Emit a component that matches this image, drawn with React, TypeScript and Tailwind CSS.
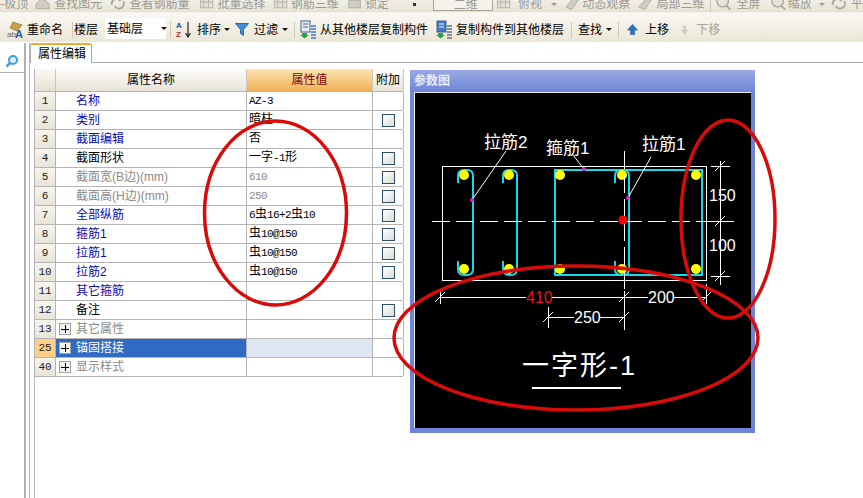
type Row = { no: string; name: string; value?: string; check?: boolean; tone?: "blue" | "gray" | "black"; group?: boolean; active?: boolean };

const rows: Row[] = [
    { no: "1", name: "名称", value: "AZ-3", tone: "blue" },
    { no: "2", name: "类别", value: "暗柱", check: true, tone: "blue" },
    { no: "3", name: "截面编辑", value: "否", tone: "blue" },
    { no: "4", name: "截面形状", value: "一字-1形", check: true, tone: "black" },
    { no: "5", name: "截面宽(B边)(mm)", value: "610", check: true, tone: "gray" },
    { no: "6", name: "截面高(H边)(mm)", value: "250", check: true, tone: "gray" },
    { no: "7", name: "全部纵筋", value: "6虫16+2虫10", check: true, tone: "blue" },
    { no: "8", name: "箍筋1", value: "虫10@150", check: true, tone: "blue" },
    { no: "9", name: "拉筋1", value: "虫10@150", check: true, tone: "blue" },
    { no: "10", name: "拉筋2", value: "虫10@150", check: true, tone: "blue" },
    { no: "11", name: "其它箍筋", tone: "blue" },
    { no: "12", name: "备注", check: true, tone: "black" },
    { no: "13", name: "其它属性", tone: "gray", group: true },
    { no: "25", name: "锚固搭接", group: true, active: true },
    { no: "40", name: "显示样式", tone: "gray", group: true },
];

function Caret({ className = "" }: { className?: string }) {
    return <span className={`inline-block w-0 h-0 border-x-[3px] border-x-transparent border-t-[3px] ${className}`} />;
}

function Sep({ className = "" }: { className?: string }) {
    return <span className={`w-px h-[16px] bg-[#cfc9b6] ${className}`} />;
}

// the top row is disabled, so its icons are washed-out grey shapes
function FadedIcon({ kind = "grid", className = "" }: { kind?: "grid" | "house" | "loop" | "lock" | "cube" | "lens"; className?: string }) {
    return (
        <svg width="16" height="14" viewBox="0 0 16 14" className={className}>
            {kind === "grid" && (
                <>
                    <rect x="1.5" y="0" width="13" height="11" fill="#e4e1d6" stroke="#b5b3a9" />
                    <path d="M5 0v11M10 0v11M1 5h14" stroke="#b5b3a9" />
                </>
            )}
            {kind === "house" && <path d="M1 7L8 0l7 7v5H1z" fill="#cfccc2" stroke="#b0aea4" />}
            {kind === "loop" && <path d="M2 8a5 5 0 0 1 9-4M14 4a5 5 0 0 1-9 5" fill="none" stroke="#a9a79e" strokeWidth="2" />}
            {kind === "lock" && (
                <>
                    <rect x="2" y="3" width="12" height="8" fill="#cfccc2" stroke="#b0aea4" />
                    <path d="M5 3V0h6v3" fill="none" stroke="#b0aea4" />
                </>
            )}
            {kind === "cube" && <path d="M2 10L10 1l5 2-7 10z" fill="#cfccc2" stroke="#b0aea4" />}
            {kind === "lens" && (
                <>
                    <circle cx="7" cy="4" r="6" fill="#e6e4da" stroke="#a9a79e" strokeWidth="1.500" />
                    <path d="M11 9l4 4" stroke="#a9a79e" strokeWidth="2" />
                </>
            )}
        </svg>
    );
}

function TopRow() {
    return (
        <div className="h-[13px] overflow-hidden bg-gradient-to-b from-[#f1efe6] to-[#e6e2d3] border-b border-[#f4f2ea]">
            <div className="flex items-center h-[14px] -mt-[3px] text-[#9a9a94] whitespace-nowrap">
                <span className="w-[28px]">-极顶</span>
                <FadedIcon kind="house" className="ml-[7px]" />
                <span className="ml-[4px]">查找图元</span>
                <FadedIcon kind="loop" className="ml-[8px]" />
                <span className="ml-[4px]">查看钢筋量</span>
                <FadedIcon className="ml-[10px]" />
                <span className="ml-[3px]">批量选择</span>
                <FadedIcon className="ml-[7px]" />
                <span className="ml-[3px]">钢筋三维</span>
                <FadedIcon kind="lock" className="ml-[8px]" />
                <span className="ml-[3px]">锁定</span>
                <span className="ml-[24px] w-[3px] h-[3px] bg-[#333]" />
                <span className="ml-[17px] w-[62px] h-[14px] border border-[#a5a296] bg-[#f4f2ea] pl-[20px]">二维</span>
                <FadedIcon className="ml-[3px]" />
                <span className="ml-[7px]">俯视</span>
                <Caret className="ml-[9px] border-t-[#9a9a94]" />
                <FadedIcon kind="cube" className="ml-[7px]" />
                <span className="ml-[3px]">动态观察</span>
                <FadedIcon kind="cube" className="ml-[7px]" />
                <span className="ml-[4px]">局部三维</span>
                <Sep className="ml-[6px]" />
                <FadedIcon kind="lens" className="ml-[5px]" />
                <span className="ml-[5px]">全屏</span>
                <FadedIcon kind="lens" className="ml-[10px]" />
                <span className="ml-[2px]">缩放</span>
                <Caret className="ml-[7px] border-t-[#9a9a94]" />
                <FadedIcon kind="loop" className="ml-[6px]" />
                <span className="ml-[5px]">平</span>
            </div>
        </div>
    );
}

function CopyIcon({ flip = false }: { flip?: boolean }) {
    return (
        <svg width="17" height="19" viewBox="0 0 17 19">
            <rect x="1" y="1" width="9" height="11" fill={flip ? "#3f78c8" : "#e8eef8"} stroke="#44608c" />
            <path d="M3 4h5M3 7h5" stroke={flip ? "#fff" : "#44608c"} />
            <path d="M2 13h5v2h2l-4.500 3.500L0 15h2z" fill="#2fa04a" />
            <path d="M11 6h5M11 9h5M11 12h5M11 15h5M11 18h5" stroke={flip ? "#5f6f80" : "#3f78c8"} strokeWidth="1.500" />
        </svg>
    );
}

function MainToolbar() {
    return (
        <div className="h-[29px] flex items-center pl-[7px] pt-[4px] whitespace-nowrap text-black bg-gradient-to-b from-[#f9f8f3] to-[#ebe6d6]">
            <svg width="17" height="18" viewBox="0 0 17 18">
                <path d="M6 1l9 3-5 6-7-3z" fill="#c8a048" stroke="#7d6420" strokeWidth="0.600" />
                <text x="0" y="16" fontSize="8" fill="#6a6a6a">ab</text>
                <text x="8" y="17" fontSize="11" fontWeight="700" fill="#2a56a8">A</text>
            </svg>
            <span className="ml-[3px]">重命名</span>
            <Sep className="ml-[9px]" />
            <span className="ml-[1px]">楼层</span>
            <span className="ml-[7px] w-[61px] h-[21px] bg-white flex items-center pl-[2px] relative -top-px">
                基础层
                <Caret className="ml-[18px] border-t-[#111]" />
            </span>
            <Sep className="ml-[4px]" />
            <svg width="18" height="17" viewBox="0 0 18 17" className="ml-[5px]">
                <text x="0" y="7" fontSize="8" fontWeight="700" fill="#2a56a8">A</text>
                <text x="0" y="16" fontSize="8" fontWeight="700" fill="#b03030">Z</text>
                <path d="M12 1v14M9.500 12l2.500 4 2.500-4" stroke="#222" strokeWidth="1.200" fill="none" />
            </svg>
            <span className="ml-[3px]">排序</span>
            <Caret className="ml-[3px] border-t-[#111]" />
            <svg width="14" height="13" viewBox="0 0 14 13" className="ml-[5px]">
                <path d="M0.500 0.500h13L8.500 6.500V12.500L5.500 10.500V6.500z" fill="#3f8fd8" stroke="#2a68a8" />
            </svg>
            <span className="ml-[5px]">过滤</span>
            <Caret className="ml-[4px] border-t-[#111]" />
            <Sep className="ml-[6px]" />
            <span className="ml-[5px] flex"><CopyIcon /></span>
            <span className="ml-[3px]">从其他楼层复制构件</span>
            <span className="ml-[8px] flex"><CopyIcon flip /></span>
            <span className="ml-[3px]">复制构件到其他楼层</span>
            <Sep className="ml-[7px]" />
            <span className="ml-[6px]">查找</span>
            <Caret className="ml-[4px] border-t-[#111]" />
            <Sep className="ml-[6px]" />
            <svg width="11" height="11" viewBox="0 0 11 11" className="ml-[8px]">
                <path d="M5.500 0.500L10.500 6H7.500V10.500H3.500V6H0.500z" fill="#2f74c8" stroke="#1d4f90" strokeWidth="0.600" />
            </svg>
            <span className="ml-[7px]">上移</span>
            <svg width="9" height="10" viewBox="0 0 9 10" className="ml-[11px]">
                <path d="M3 0.500H6V5H8.500L4.500 9.500L0.500 5H3z" fill="#cfcdc6" />
            </svg>
            <span className="ml-[7px] text-[#a5a39c]">下移</span>
        </div>
    );
}

function CheckBox() {
    return <span className="block w-[13px] h-[13px] border border-[#2f4f6f] bg-gradient-to-br from-white to-[#dcdcd4]" />;
}

function ValueText({ text, gray }: { text: string; gray?: boolean }) {
    // latin parts of a value sit on a half-width grid, as in the grid control
    const parts = text.split(/([A-Za-z0-9@+\-]+)/).filter(Boolean);
    return (
        <span className={gray ? "text-[#8c8c8c]" : "text-black"}>
            {parts.map((p, i) =>
                /[A-Za-z0-9@+\-]/.test(p) ? (
                    <span key={i} className="font-['Liberation_Mono',monospace] text-[11px] tracking-[-0.6px]">{p}</span>
                ) : (
                    <span key={i}>{p}</span>
                )
            )}
        </span>
    );
}

function PropRow({ row }: { row: Row }) {
    const nameColor = row.active ? "text-white" : row.tone === "blue" ? "text-[#0a0ab4]" : row.tone === "gray" ? "text-[#8a8a8a]" : "text-black";
    return (
        <div className="flex h-[19px] border-b border-[#b4b4b4] whitespace-nowrap">
            <div className={`w-[21px] shrink-0 text-center border-r border-[#b4b4b4] text-[#222] font-['Liberation_Mono',monospace] text-[11px] leading-[18px] ${row.active ? "bg-[#ffcf8c] text-[#7a1010]" : "bg-gradient-to-b from-[#f7f5ee] to-[#e8e4d8]"}`}>
                {row.no}
            </div>
            <div className={`w-[191px] shrink-0 border-r border-[#b4b4b4] flex items-center ${row.active ? "bg-[#316ac5]" : ""} ${row.group ? "pl-[3px]" : "pl-[20px]"} ${nameColor}`}>
                {row.group && (
                    <span className="w-[12px] h-[12px] mr-[5px] border border-[#a0a0a0] bg-[#f4f4f0] flex items-center justify-center relative">
                        <span className="absolute w-[8px] h-px bg-black" />
                        <span className="absolute w-px h-[8px] bg-black" />
                    </span>
                )}
                {row.name}
            </div>
            <div className={`w-[126px] shrink-0 border-r border-[#b4b4b4] pl-[2px] leading-[17px] ${row.active ? "bg-[#dde6f2]" : ""}`}>
                {row.value && <ValueText text={row.value} gray={row.tone === "gray"} />}
            </div>
            <div className="w-[31px] shrink-0 border-r border-[#b4b4b4] flex items-center justify-center">
                {row.check && <CheckBox />}
            </div>
        </div>
    );
}

function PropTable() {
    return (
        <div className="w-[369px] shrink-0 mt-[6px] border-l border-[#b4b4b4]">
            <div className="flex h-[23px] border-b border-[#b4b4b4] whitespace-nowrap">
                <div className="w-[21px] shrink-0 border-r border-[#c8c8c0] bg-gradient-to-b from-[#fbfaf6] to-[#e4e0d2]" />
                <div className="w-[191px] shrink-0 border-r border-[#c8c8c0] flex items-center justify-center bg-gradient-to-b from-[#fdfcf9] to-[#e8e4d6]">属性名称</div>
                <div className="w-[126px] shrink-0 border-r border-[#c8c8c0] flex items-center justify-center text-[#7a0a0a] bg-gradient-to-b from-[#fbe3b0] to-[#f0b254]">属性值</div>
                <div className="w-[31px] shrink-0 border-r border-[#c8c8c0] flex items-center justify-center bg-gradient-to-b from-[#fdfcf9] to-[#e8e4d6]">附加</div>
            </div>
            {rows.map((r) => (
                <PropRow key={r.no} row={r} />
            ))}
        </div>
    );
}

function Rebar({ x, side = 15 }: { x: number; side?: number }) {
    const l = x - side;
    return (
        <path
            d={`M${l} 183V176Q${l} 170 ${l + 6} 170H${x - 6}Q${x} 170 ${x} 176V269Q${x} 275 ${x - 6} 275H${l + 6}Q${l} 275 ${l} 269V261`}
            fill="none"
            stroke="#19d7e6"
            strokeWidth="2"
        />
    );
}

function Tick({ x, y }: { x: number; y: number }) {
    return <path d={`M${x - 5} ${y + 5}L${x + 5} ${y - 5}`} stroke="#fff" />;
}

// viewBox uses the page coordinates read off the reference
function ParamDrawing() {
    const dots = [464, 509, 560, 622, 696];
    return (
        <svg width="336" height="335" viewBox="415 93 336 335" className="block">
            <rect x="442.500" y="166.500" width="264" height="114" fill="none" stroke="#fff" />
            <Rebar x={473} />
            <Rebar x={517} side={14} />
            <Rebar x={629} side={14} />
            <rect x="555" y="170" width="147" height="105" fill="none" stroke="#19d7e6" strokeWidth="2" />
            {dots.map((x) => (
                <g key={x}>
                    <circle cx={x} cy="175" r="5" fill="#ffff00" />
                    <circle cx={x} cy="269" r="5" fill="#ffff00" />
                </g>
            ))}
            <path d="M432 221.500H734" stroke="#fff" strokeDasharray="18 6" />
            <path d="M624.500 151V330" stroke="#fff" strokeDasharray="18 6" />
            <circle cx="623" cy="220" r="4.500" fill="#ff0000" />
            <path d="M506 151L472 200M573 155L584 169M651 157L628 198" stroke="#fff" />
            <circle cx="472" cy="200" r="2" fill="#e020d0" />
            <circle cx="584" cy="169" r="2" fill="#e020d0" />
            <circle cx="628" cy="198" r="2" fill="#e020d0" />
            <g fill="#fff" fontSize="17">
                <text x="484" y="148">拉筋2</text>
                <text x="546" y="154">箍筋1</text>
                <text x="642" y="150">拉筋1</text>
            </g>
            <path d="M720.500 161V285M711 166.500H730M711 221.500H734M711 276.500H730" stroke="#fff" />
            <Tick x={720} y={166} />
            <Tick x={720} y={221} />
            <Tick x={720} y={276} />
            <path d="M440.500 291V304M624.500 291V330M706.500 284V304M548.500 307V328" stroke="#fff" />
            <path d="M440 297.500H526M552 297.500H648M674 297.500H707M548 317.500H574M600 317.500H624" stroke="#fff" />
            <Tick x={440} y={297} />
            <Tick x={624} y={297} />
            <Tick x={706} y={297} />
            <Tick x={548} y={317} />
            <Tick x={624} y={317} />
            <g fontSize="16" className="font-['Liberation_Sans',sans-serif]" fill="#fff">
                <text x="709" y="201">150</text>
                <text x="709" y="251">100</text>
                <text x="526" y="303" fill="#e01818">410</text>
                <text x="648" y="303">200</text>
                <text x="574" y="323">250</text>
            </g>
            <text x="522" y="375" fontSize="27" letterSpacing="2" fill="#fff">一字形-1</text>
            <rect x="532" y="387" width="89" height="2" fill="#fff" />
        </svg>
    );
}

function ParamPanel() {
    return (
        <div className="ml-[7px] mt-[7px] w-[345px] h-[363px] shrink-0 flex flex-col bg-[#6f83d8]">
            <div className="h-[22px] pl-[4px] flex items-center font-bold text-[#e8ecfa] bg-gradient-to-b from-[#9aa9e4] to-[#6f86d6]">参数图</div>
            <div className="mx-[4px] h-[336px] bg-black border-l border-t border-[#e8e8f0] overflow-hidden">
                <ParamDrawing />
            </div>
        </div>
    );
}

function RedMarks() {
    return (
        <svg width="863" height="498" className="absolute inset-0 pointer-events-none">
            <g fill="none" stroke="#d80a0a" strokeWidth="3.500">
                <ellipse cx="275.500" cy="213" rx="71" ry="92" />
                <ellipse cx="728" cy="219" rx="47" ry="99" />
                <ellipse cx="576" cy="338" rx="182" ry="72" />
            </g>
        </svg>
    );
}

export default function App() {
    return (
        <div className="relative w-[863px] h-[498px] overflow-hidden bg-white text-[12px] leading-[14px] text-black flex flex-col font-['Liberation_Sans','Noto_Sans_CJK_SC',sans-serif]">
            <TopRow />
            <MainToolbar />
            <div className="flex-1 flex min-h-0 pt-px">
                {/* search rail */}
                <div className="w-[24px] h-[30px] shrink-0 border-b border-[#b0b0a8] flex items-end justify-center pb-[4px] bg-white">
                    <svg width="14" height="14" viewBox="0 0 14 14">
                        <circle cx="8" cy="6" r="4" fill="#d8eefa" stroke="#3f9fd8" strokeWidth="2" />
                        <path d="M5 9L1.500 12.500" stroke="#3f9fd8" strokeWidth="2.500" />
                    </svg>
                </div>
                <div className="w-[2px] shrink-0 bg-[#b0b0a8]" />
                <div className="w-[3px] shrink-0" />
                <div className="flex-1 flex flex-col min-w-0 border-l border-[#b4b8c0]">
                    <div className="h-[20px] shrink-0 border-b border-[#a4a8b0] flex items-end">
                        <div className="w-[62px] h-[20px] -mb-px pl-[7px] leading-[19px] bg-white border-x border-[#a4a8b0] border-t-2 border-t-[#f0a830] rounded-t-[2px]">
                            属性编辑
                        </div>
                    </div>
                    <div className="flex-1 flex pl-[4px] min-h-0">
                        <PropTable />
                        <ParamPanel />
                    </div>
                </div>
            </div>
            <RedMarks />
        </div>
    );
}
